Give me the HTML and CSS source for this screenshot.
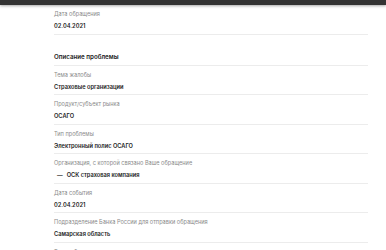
FILE: index.html
```html
<!DOCTYPE html>
<html lang="ru">
<head>
    <meta charset="UTF-8">
    <meta name="viewport" content="width=device-width, initial-scale=1.0">
    <title>Обращение</title>
    <link rel="stylesheet" href="styles.css">
</head>
<body>
    <div class="topbar"></div>

    <div class="container">
        <div class="field">
            <div class="label">Дата обращения</div>
            <div class="value">02.04.2021</div>
        </div>

        <h2 class="section-title">Описание проблемы</h2>

        <div class="field">
            <div class="label">Тема жалобы</div>
            <div class="value">Страховые организации</div>
        </div>

        <div class="field">
            <div class="label">Продукт/субъект рынка</div>
            <div class="value">ОСАГО</div>
        </div>

        <div class="field">
            <div class="label">Тип проблемы</div>
            <div class="value">Электронный полис ОСАГО</div>
        </div>

        <div class="field">
            <div class="label">Организация, с которой связано Ваше обращение</div>
            <div class="value value-list">ОСК страховая компания</div>
        </div>

        <div class="field">
            <div class="label">Дата события</div>
            <div class="value">02.04.2021</div>
        </div>

        <div class="field">
            <div class="label">Подразделение Банка России для отправки обращения</div>
            <div class="value">Самарская область</div>
        </div>

        <div class="field">
            <div class="label">Текст обращения</div>
            <div class="value">Прошу разобраться</div>
        </div>
    </div>
</body>
</html>
```

FILE: styles.css
```css
body {
    margin: 0;
    font-family: Inter, "Noto Sans", sans-serif;
    background-color: #fff;
    color: #222;
    overflow: hidden;
}
.topbar {
    height: 5px;
    background-color: #333;
    box-shadow: 0 1px 3px rgba(0, 0, 0, 0.35);
}
.container {
    width: 314px;
    margin-left: 54px;
}
.field {
    padding: 5px 0 3.5px;
    border-bottom: 1px solid #ececec;
}
.label {
    font-size: 5.6px;
    line-height: 8px;
    color: #8a8a8a;
}
.value {
    margin-top: 3px;
    font-size: 5.7px;
    line-height: 9px;
    font-weight: 600;
}
.value-list::before {
    content: "—";
    margin: 0 4px 0 3px;
}
.section-title {
    margin: 17px 0 0;
    padding-bottom: 3px;
    font-size: 6.2px;
    line-height: 10px;
    font-weight: 600;
    border-bottom: 1px solid #ececec;
}
```
